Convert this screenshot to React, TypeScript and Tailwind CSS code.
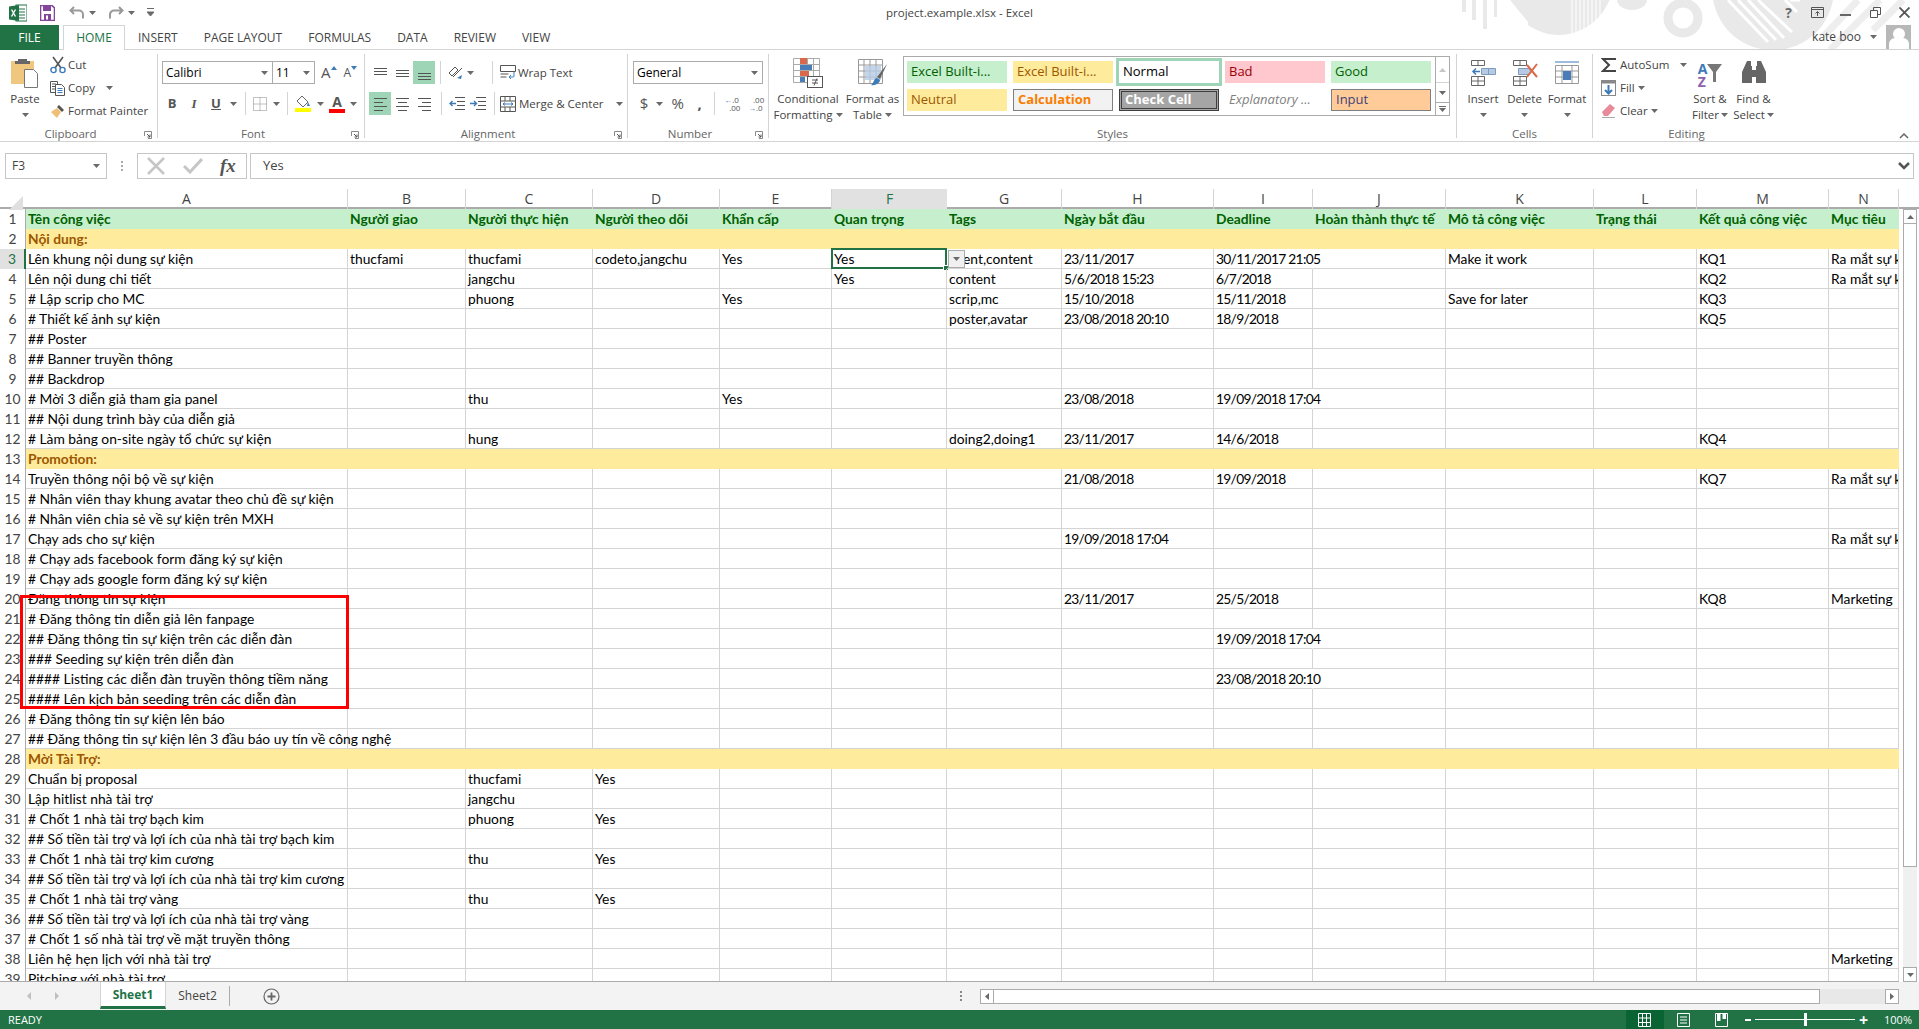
type RowData = {
  n: number;
  a: string;
  b?: string;
  c?: string;
  d?: string;
  e?: string;
  f?: string;
  g?: string;
  h?: string;
  i?: string;
  j?: string;
  k?: string;
  l?: string;
  m?: string;
  o?: string;
  kind?: "banner";
};

const rows: RowData[] = [
  { n: 2, a: "Nội dung:", kind: "banner" },
  { n: 3, a: "Lên khung nội dung sự kiện", b: "thucfami", c: "thucfami", d: "codeto,jangchu", e: "Yes", f: "Yes", g: "event,content", h: "23/11/2017", i: "30/11/2017 21:05", k: "Make it work", m: "KQ1", o: "Ra mắt sự kiện" },
  { n: 4, a: "Lên nội dung chi tiết", c: "jangchu", f: "Yes", g: "content", h: "5/6/2018 15:23", i: "6/7/2018", m: "KQ2", o: "Ra mắt sự kiện" },
  { n: 5, a: "# Lập scrip cho MC", c: "phuong", e: "Yes", g: "scrip,mc", h: "15/10/2018", i: "15/11/2018", k: "Save for later", m: "KQ3" },
  { n: 6, a: "# Thiết kế ảnh sự kiện", g: "poster,avatar", h: "23/08/2018 20:10", i: "18/9/2018", m: "KQ5" },
  { n: 7, a: "## Poster" },
  { n: 8, a: "## Banner truyền thông" },
  { n: 9, a: "## Backdrop" },
  { n: 10, a: "# Mời 3 diễn giả tham gia panel", c: "thu", e: "Yes", h: "23/08/2018", i: "19/09/2018 17:04" },
  { n: 11, a: "## Nội dung trình bày của diễn giả" },
  { n: 12, a: "# Làm bảng on-site ngày tổ chức sự kiện", c: "hung", g: "doing2,doing1", h: "23/11/2017", i: "14/6/2018", m: "KQ4" },
  { n: 13, a: "Promotion:", kind: "banner" },
  { n: 14, a: "Truyền thông nội bộ về sự kiện", h: "21/08/2018", i: "19/09/2018", m: "KQ7", o: "Ra mắt sự kiện" },
  { n: 15, a: "# Nhân viên thay khung avatar theo chủ đề sự kiện" },
  { n: 16, a: "# Nhân viên chia sẻ về sự kiện trên MXH" },
  { n: 17, a: "Chạy ads cho sự kiện", h: "19/09/2018 17:04", o: "Ra mắt sự kiện" },
  { n: 18, a: "# Chạy ads facebook form đăng ký sự kiện" },
  { n: 19, a: "# Chạy ads google form đăng ký sự kiện" },
  { n: 20, a: "Đăng thông tin sự kiện", h: "23/11/2017", i: "25/5/2018", m: "KQ8", o: "Marketing" },
  { n: 21, a: "# Đăng thông tin diễn giả lên fanpage" },
  { n: 22, a: "## Đăng thông tin sự kiện trên các diễn đàn", i: "19/09/2018 17:04" },
  { n: 23, a: "### Seeding sự kiện trên diễn đàn" },
  { n: 24, a: "#### Listing các diễn đàn truyền thông tiềm năng", i: "23/08/2018 20:10" },
  { n: 25, a: "#### Lên kịch bản seeding trên các diễn đàn" },
  { n: 26, a: "# Đăng thông tin sự kiện lên báo" },
  { n: 27, a: "## Đăng thông tin sự kiện lên 3 đầu báo uy tín về công nghệ" },
  { n: 28, a: "Mời Tài Trợ:", kind: "banner" },
  { n: 29, a: "Chuẩn bị proposal", c: "thucfami", d: "Yes" },
  { n: 30, a: "Lập hitlist nhà tài trợ", c: "jangchu" },
  { n: 31, a: "# Chốt 1 nhà tài trợ bạch kim", c: "phuong", d: "Yes" },
  { n: 32, a: "## Số tiền tài trợ và lợi ích của nhà tài trợ bạch kim" },
  { n: 33, a: "# Chốt 1 nhà tài trợ kim cương", c: "thu", d: "Yes" },
  { n: 34, a: "## Số tiền tài trợ và lợi ích của nhà tài trợ kim cương" },
  { n: 35, a: "# Chốt 1 nhà tài trợ vàng", c: "thu", d: "Yes" },
  { n: 36, a: "## Số tiền tài trợ và lợi ích của nhà tài trợ vàng" },
  { n: 37, a: "# Chốt 1 số nhà tài trợ về mặt truyền thông" },
  { n: 38, a: "Liên hệ hẹn lịch với nhà tài trợ", o: "Marketing" },
  { n: 39, a: "Pitching với nhà tài trợ" },
];

const letters = ["A", "B", "C", "D", "E", "F", "G", "H", "I", "J", "K", "L", "M", "N"];
const heads = ["Tên công việc", "Người giao", "Người thực hiện", "Người theo dõi", "Khẩn cấp", "Quan trọng", "Tags", "Ngày bắt đầu", "Deadline", "Hoàn thành thực tế", "Mô tả công việc", "Trạng thái", "Kết quả công việc", "Mục tiêu"];
const gridCols = "grid grid-cols-[26px_322px_118px_127px_127px_112px_115px_115px_152px_99px_133px_148px_103px_132px_70px]";

const Caret = ({ className = "" }: { className?: string }) => (
  <svg width="7" height="4" viewBox="0 0 7 4" className={className}>
    <path d="M0 0h7L3.5 4z" fill="#6a6a6a" />
  </svg>
);

const Launcher = () => (
  <svg width="8" height="8" viewBox="0 0 8 8" className="absolute right-[5px] bottom-[-1px]">
    <path d="M.5 5V.5H7.5V7.5H4" fill="none" stroke="#8a8a8a" />
    <path d="M3 3l3 3M6 3.5V6H3.5" fill="none" stroke="#555" />
  </svg>
);

const Sep = () => <div className="mx-auto h-[23px] w-px bg-[#d4d4d4]" />;

const Slot = ({ w, children }: { w: string; children?: React.ReactNode }) => (
  <div className={`${w} flex h-[23px] items-center justify-center`}>{children}</div>
);

const Lines = ({ ys, x1, x2 }: { ys: number[]; x1: number[]; x2: number[] }) => (
  <svg width="16" height="16" viewBox="0 0 16 16">
    {ys.map((y, i) => (
      <path key={y} d={`M${x1[i]} ${y + 0.5}H${x2[i]}`} stroke="#555" />
    ))}
  </svg>
);

const Group = ({ w, label, launcher, last, children }: { w: string; label: string; launcher?: boolean; last?: boolean; children: React.ReactNode }) => (
  <div className={`${w} relative flex h-[84px] shrink-0 flex-col ${last ? "" : "border-r border-[#d4d4d4]"}`}>
    <div className="h-[72px]">{children}</div>
    <div className={`h-[12px] text-center text-[11.5px] leading-[16px] text-[#666] ${launcher ? "pr-[16px]" : ""}`}>{label}</div>
    {launcher && <Launcher />}
  </div>
);

const TitleDecor = () => (
  <svg width="479" height="50" viewBox="0 0 479 50" className="absolute top-0 right-0" fill="#e9e9e9">
    <rect x="22" y="0" width="4" height="12" />
    <rect x="32" y="0" width="4" height="20" />
    <rect x="43" y="0" width="4" height="29" />
    <rect x="54" y="0" width="3" height="17" />
    <path d="M70 0l18 22V0z" />
    <path d="M88 0h82l-1 1C160 22 140 35 118 35c-11 0-21-4-30-10z" />
    <path d="M132 0v35M136 0v35M140 0v33M144 0v31M148 0v28M152 0v25M156 0v21M160 0v16" stroke="#fff" strokeWidth="1" />
    <path d="M177 0h30a15 10 0 0 1-30 0z" />
    <circle cx="243" cy="18" r="15" fill="none" stroke="#e9e9e9" strokeWidth="9" />
    <path d="M273 0h120c-6 30-30 50-60 50s-54-20-60-50z" />
    <path d="M288 0l40 42M298 0l38 40M308 0l36 38M318 0l34 32" stroke="#fff" strokeWidth="3" />
    <path d="M345 0l12 12M360 0l-10 0" stroke="#fff" strokeWidth="3" />
    <path d="M418 0l-34 36M440 0l-50 50M463 0l-30 30" stroke="#eeeeee" strokeWidth="7" fill="none" />
  </svg>
);

const TitleBar = () => (
  <div className="relative flex h-[25px] shrink-0 items-center text-[11.5px] text-[#444]">
    <TitleDecor />
    <svg width="18" height="18" viewBox="0 0 18 18" className="relative ml-[9px]">
      <rect x="7" y="1" width="11" height="16" fill="#fff" stroke="#217346" />
      <path d="M10 5h6M10 8h6M10 11h6M10 14h6" stroke="#217346" />
      <path d="M0 2.5l10-1.5v16L0 15.5z" fill="#217346" />
      <path d="M2.5 5.5l4 7M6.5 5.5l-4 7" stroke="#fff" strokeWidth="1.4" />
    </svg>
    <svg width="15" height="16" viewBox="0 0 15 16" className="ml-[13px]">
      <path d="M.5.5H12L14.5 3V15.5H.5z" fill="#fff" stroke="#82479a" strokeWidth="1.6" />
      <rect x="3" y="1" width="8" height="5" fill="#82479a" />
      <rect x="4" y="9" width="7" height="6" fill="#82479a" />
      <rect x="6" y="10.5" width="2" height="4" fill="#fff" />
    </svg>
    <svg width="16" height="14" viewBox="0 0 16 14" fill="none" stroke="#9a9a9a" strokeWidth="2" className="ml-[14px]">
      <path d="M5 1L1.5 4.5 5 8M2 4.5h8a4 4 0 0 1 4 4v4" />
    </svg>
    <Caret className="ml-[4px]" />
    <svg width="16" height="14" viewBox="0 0 16 14" fill="none" stroke="#9a9a9a" strokeWidth="2" className="ml-[12px]">
      <path d="M11 1l3.5 3.5L11 8M14 4.5H6a4 4 0 0 0-4 4v4" />
    </svg>
    <Caret className="ml-[4px]" />
    <svg width="7" height="9" viewBox="0 0 7 9" className="ml-[12px]">
      <path d="M0 .5h7M0 4h7L3.5 8z" stroke="#6a6a6a" fill="#6a6a6a" strokeWidth="1" />
    </svg>
    <div className="absolute inset-x-0 top-0 text-center leading-[26px]">project.example.xlsx - Excel</div>
    <div className="relative ml-auto flex items-center">
      <span className="mr-[19px] text-[14px] font-bold text-[#6a6a6a]">?</span>
      <svg width="13" height="11" viewBox="0 0 13 11" className="mr-[16px]" fill="none" stroke="#555">
        <path d="M.5.5h12v10H.5zM.5 2.5h12M6.5 9V4.5M4.5 6.5l2-2 2 2" />
      </svg>
      <div className="mr-[19px] h-[2px] w-[11px] translate-y-[2px] bg-[#666]" />
      <svg width="11" height="11" viewBox="0 0 11 11" className="mr-[18px]" fill="none" stroke="#555">
        <path d="M.5 3.5h7v7H.5zM3.5 3V.5h7v7H8" />
      </svg>
      <svg width="11" height="11" viewBox="0 0 11 11" className="mr-[9px]" stroke="#555" strokeWidth="1.8">
        <path d="M.5.5l10 10M10.5.5l-10 10" />
      </svg>
    </div>
  </div>
);

const tabClass = "flex h-[25px] items-center px-[13px] text-[12px] text-[#444]";

const Tabs = () => (
  <div className="relative flex h-[25px] shrink-0 border-b border-[#d4d4d4]">
    <div className="flex h-[25px] w-[59px] items-center justify-center bg-[#217346] text-[12px] text-white">FILE</div>
    <div className="ml-[4px] flex h-[25px] w-[62px] items-center justify-center border-x border-t border-[#d4d4d4] bg-white text-[12px] text-[#217346]">HOME</div>
    <div className={tabClass}>INSERT</div>
    <div className={tabClass}>PAGE LAYOUT</div>
    <div className={tabClass}>FORMULAS</div>
    <div className={tabClass}>DATA</div>
    <div className={tabClass}>REVIEW</div>
    <div className={tabClass}>VIEW</div>
    <div className="absolute top-0 right-[8px] flex h-[24px] items-center text-[12px] text-[#444]">
      <span>kate boo</span>
      <Caret className="mx-[9px]" />
      <div className="flex h-[24px] w-[25px] flex-col items-center overflow-hidden bg-[#b8b8b8]">
        <div className="mt-[3px] h-[13px] w-[12px] rounded-full bg-white" />
        <div className="mt-[-2px] h-[12px] w-[20px] rounded-t-md bg-white" />
      </div>
    </div>
  </div>
);

const Clipboard = () => (
  <Group w="w-[158px]" label="Clipboard" launcher>
    <div className="flex">
      <div className="flex w-[50px] flex-col items-center pt-[4px]">
        <svg width="30" height="30" viewBox="0 0 30 30">
          <path d="M1 3h23v23H1z" fill="#f0c77e" />
          <path d="M8 3V1h9v2h3v3H5V3z" fill="#666" />
          <path d="M14.5 11.5h9l4 4v14h-13z" fill="#fff" stroke="#777" />
        </svg>
        <span className="mt-[2px] text-[11.5px] text-[#444]">Paste</span>
        <Caret className="mt-[6px]" />
      </div>
      <div className="mt-[-1px] flex flex-col text-[11.5px] text-[#444]">
        <div className="flex h-[23px] items-center">
          <svg width="16" height="18" viewBox="0 0 16 18" fill="none" className="mr-[2px]">
            <path d="M3 1l8 11M13 1L5 12" stroke="#555" strokeWidth="1.6" />
            <circle cx="3.5" cy="14" r="2.6" stroke="#3d7ab8" strokeWidth="1.4" />
            <circle cx="12.5" cy="14" r="2.6" stroke="#3d7ab8" strokeWidth="1.4" />
          </svg>
          Cut
        </div>
        <div className="flex h-[23px] items-center">
          <svg width="16" height="16" viewBox="0 0 16 16" fill="none" stroke="#555" className="mr-[2px]">
            <path d="M.5 1.5h7v11h-7zM2 4h4M2 6.5h3M2 9h3" />
            <path d="M5.5 4.5h6l3 3v8h-9z" fill="#fff" />
            <path d="M7.5 8.5h5M7.5 10.5h5M7.5 12.5h5" stroke="#3d7ab8" />
          </svg>
          Copy
          <Caret className="ml-[11px]" />
        </div>
        <div className="flex h-[23px] items-center">
          <svg width="16" height="16" viewBox="0 0 16 16" className="mr-[2px]">
            <path d="M9 2l5 5-2 2-5-5z" fill="#555" />
            <path d="M7 5l4 4-4 6-6-6z" fill="#eebf74" />
          </svg>
          Format Painter
        </div>
      </div>
    </div>
  </Group>
);

const boxClass = "flex h-[23px] items-center border border-[#ababab] bg-white text-[12px] text-black";

const FontGroup = () => (
  <Group w="w-[207px]" label="Font" launcher>
    <div className="flex items-center pt-[7px] pl-[4px]">
      <div className={`${boxClass} w-[111px] justify-between pr-[4px] pl-[3px]`}>
        Calibri
        <Caret />
      </div>
      <div className={`${boxClass} ml-[-1px] w-[43px] justify-between pr-[4px] pl-[3px]`}>
        11
        <Caret />
      </div>
      <div className="ml-[6px] flex h-[23px] items-center text-[#555]">
        <span className="text-[15px]">A</span>
        <svg width="6" height="4" viewBox="0 0 6 4" className="mb-[10px]"><path d="M0 4l3-4 3 4z" fill="#3d7ab8" /></svg>
        <span className="ml-[7px] text-[12px]">A</span>
        <svg width="6" height="4" viewBox="0 0 6 4" className="mb-[10px]"><path d="M0 0l3 4 3-4z" fill="#3d7ab8" /></svg>
      </div>
    </div>
    <div className="mt-[8px] flex pl-[3px] text-[13px] text-[#555]">
      <Slot w="w-[22px]"><span className="font-bold">B</span></Slot>
      <Slot w="w-[22px]"><span className="font-['Liberation_Serif',serif] font-bold italic">I</span></Slot>
      <Slot w="w-[22px]"><span className="font-bold underline">U</span></Slot>
      <Slot w="w-[12px]"><Caret /></Slot>
      <Slot w="w-[12px]"><Sep /></Slot>
      <Slot w="w-[18px]">
        <svg width="14" height="14" viewBox="0 0 14 14" fill="none" stroke="#888" strokeDasharray="1 1">
          <path d="M.5.5h13v13H.5zM.5 7h13M7 .5v13" />
        </svg>
      </Slot>
      <Slot w="w-[14px]"><Caret /></Slot>
      <Slot w="w-[8px]"><Sep /></Slot>
      <Slot w="w-[23px]">
        <svg width="16" height="17" viewBox="0 0 16 17">
          <path d="M7 1l6 6-5 5-6-6z" fill="#fff" stroke="#666" />
          <path d="M13 7l2 4h-3z" fill="#3d7ab8" />
          <rect y="13" width="16" height="4" fill="#ffff00" />
        </svg>
      </Slot>
      <Slot w="w-[12px]"><Caret /></Slot>
      <Slot w="w-[22px]">
        <div className="flex flex-col items-center">
          <span className="h-[13px] text-[14px] leading-[14px] font-bold">A</span>
          <div className="mt-[1px] h-[4px] w-[16px] bg-[#ff0000]" />
        </div>
      </Slot>
      <Slot w="w-[10px]"><Caret /></Slot>
    </div>
  </Group>
);

const Alignment = () => (
  <Group w="w-[263px]" label="Alignment" launcher>
    <div className="flex items-center pt-[7px] pl-[4px] text-[11.5px] text-[#444]">
      <Slot w="w-[22px]"><Lines ys={[3, 6, 9]} x1={[2, 2, 2]} x2={[15, 15, 15]} /></Slot>
      <Slot w="w-[22px]"><Lines ys={[5, 8, 11]} x1={[2, 2, 2]} x2={[15, 15, 15]} /></Slot>
      <Slot w="w-[22px]"><div className="flex h-[23px] w-[22px] items-center justify-center bg-[#9fd5b7]"><Lines ys={[8, 11, 14]} x1={[2, 2, 2]} x2={[15, 15, 15]} /></div></Slot>
      <Slot w="w-[10px]"><Sep /></Slot>
      <Slot w="w-[20px]">
        <svg width="17" height="17" viewBox="0 0 17 17" fill="none" stroke="#555">
          <path d="M2 9l6-6 3 3-6 6zM6 13l9-9" />
          <path d="M10 14l5-3-1 4z" fill="#3d7ab8" stroke="none" />
        </svg>
      </Slot>
      <Slot w="w-[11px]"><Caret /></Slot>
      <Slot w="w-[24px]"><div className="ml-[8px]"><Sep /></div></Slot>
      <svg width="16" height="16" viewBox="0 0 16 16" fill="none" stroke="#555">
        <path d="M.5.5h15v6H.5zM.5 9h8M.5 12h6" />
        <path d="M14 7v4a1 1 0 0 1-1 1H9M11 10l-2 2 2 2" stroke="#3d7ab8" />
      </svg>
      <span className="ml-[2px]">Wrap Text</span>
    </div>
    <div className="mt-[8px] flex items-center pl-[4px] text-[11.5px] text-[#444]">
      <Slot w="w-[22px]"><div className="flex h-[23px] w-[22px] items-center justify-center bg-[#9fd5b7]"><Lines ys={[2, 6, 10, 14]} x1={[2, 2, 2, 2]} x2={[15, 11, 15, 11]} /></div></Slot>
      <Slot w="w-[22px]"><Lines ys={[2, 6, 10, 14]} x1={[2, 4, 2, 4]} x2={[15, 13, 15, 13]} /></Slot>
      <Slot w="w-[22px]"><Lines ys={[2, 6, 10, 14]} x1={[2, 6, 2, 6]} x2={[15, 15, 15, 15]} /></Slot>
      <Slot w="w-[12px]"><Sep /></Slot>
      <Slot w="w-[20px]">
        <svg width="16" height="14" viewBox="0 0 16 14" fill="none">
          <path d="M6 .5h10M8 4.5h8M8 8.5h8M6 12.5h10" stroke="#555" />
          <path d="M7 6.5H1M3.5 4L1 6.5 3.5 9" stroke="#3d7ab8" strokeWidth="1.4" />
        </svg>
      </Slot>
      <Slot w="w-[22px]">
        <svg width="16" height="14" viewBox="0 0 16 14" fill="none">
          <path d="M6 .5h10M8 4.5h8M8 8.5h8M6 12.5h10" stroke="#555" />
          <path d="M0 6.5h6M4 4l2.5 2.5L4 9" stroke="#3d7ab8" strokeWidth="1.4" />
        </svg>
      </Slot>
      <Slot w="w-[10px]"><Sep /></Slot>
      <svg width="16" height="16" viewBox="0 0 16 16" fill="none" stroke="#555" className="ml-[1px]">
        <path d="M.5.5h15v15H.5zM.5 5h15M.5 11h15M5 .5V5M10 .5V5M5 11v4.5M10 11v4.5" />
        <path d="M3 8h10M5 6.5L3 8l2 1.500M11 6.500L13 8l-2 1.500" stroke="#3d7ab8" />
      </svg>
      <span className="ml-[3px]">Merge &amp; Center</span>
      <Caret className="ml-[12px]" />
    </div>
  </Group>
);

const NumberGroup = () => (
  <Group w="w-[141px]" label="Number" launcher>
    <div className="pt-[7px] pl-[5px]">
      <div className={`${boxClass} w-[130px] justify-between pr-[4px] pl-[3px]`}>
        General
        <Caret />
      </div>
    </div>
    <div className="mt-[8px] flex items-center pl-[5px] text-[#555]">
      <Slot w="w-[22px]"><span className="text-[15px]">$</span></Slot>
      <Slot w="w-[10px]"><Caret /></Slot>
      <Slot w="w-[26px]"><span className="text-[15px]">%</span></Slot>
      <Slot w="w-[18px]"><span className="text-[15px] font-bold">,</span></Slot>
      <Slot w="w-[12px]"><Sep /></Slot>
      <Slot w="w-[24px]">
        <div className="flex flex-col text-[8px] leading-[8px]">
          <span><span className="font-bold text-[#3d7ab8]">←</span>.0</span>
          <span className="pl-[5px]">.00</span>
        </div>
      </Slot>
      <Slot w="w-[24px]">
        <div className="flex flex-col text-[8px] leading-[8px]">
          <span className="pl-[5px]">.00</span>
          <span><span className="font-bold text-[#3d7ab8]">→</span>.0</span>
        </div>
      </Slot>
    </div>
  </Group>
);

const galleryCell = "flex h-[22px] w-[100px] items-center pl-[4px] text-[13px]";

const StylesGroup = () => (
  <Group w="w-[688px]" label="Styles">
    <div className="flex">
      <div className="ml-[5px] flex w-[68px] flex-col items-center pt-[4px] text-[11.5px] leading-[16px] text-[#444]">
        <svg width="30" height="30" viewBox="0 0 30 30">
          <path d="M.5.500h26v24H.5zM.5 6.500h26M.5 12.500h26M.5 18.500h26M7.500.5v24M14.500.5v24M20.500.5v24" fill="#fff" stroke="#aaa" />
          <rect x="7" y="0" width="7" height="6" fill="#d9694a" />
          <rect x="7" y="7" width="12" height="5" fill="#4a7db8" />
          <rect x="7" y="13" width="9" height="5" fill="#d9694a" />
          <rect x="7" y="19" width="5" height="5" fill="#4a7db8" />
          <rect x="14.500" y="18.500" width="15" height="11" fill="#fff" stroke="#555" />
          <path d="M19 22h6M19 25h6M24 20.500l-3 7" stroke="#555" />
        </svg>
        <span className="mt-[3px]">Conditional</span>
        <span className="flex items-center gap-[3px]">Formatting <Caret /></span>
      </div>
      <div className="flex w-[61px] flex-col items-center pt-[4px] text-[11.5px] leading-[16px] text-[#444]">
        <svg width="30" height="30" viewBox="0 0 30 30">
          <path d="M.5 1.500h24v24H.5zM.5 7h24M.5 13h24M.5 19h24M6 1.500v24M12 1.500v24M18 1.500v24" fill="#fff" stroke="#999" />
          <rect x="7" y="8" width="16" height="14" fill="#b6cbe3" opacity="0.8" />
          <path d="M29 6L19 19l3 2z" fill="#666" />
          <path d="M19 20l3 2c0 3-5 6-9 5 3-2 3-7 6-7z" fill="#3d7ab8" />
        </svg>
        <span className="mt-[3px]">Format as</span>
        <span className="flex items-center gap-[3px]">Table <Caret /></span>
      </div>
      <div className="mt-[2px] flex h-[60px] w-[547px] shrink-0 items-start border border-[#ababab] bg-white">
        <div className="grid grid-cols-[100px_100px_106px_100px_100px] grid-rows-[22px_22px] gap-x-[4px] gap-y-[6px] pt-[4px] pl-[3px]">
          <div className={`${galleryCell} bg-[#c6efce] text-[#006100]`}>Excel Built-i...</div>
          <div className={`${galleryCell} ml-[2px] bg-[#ffeb9c] text-[#9c5700]`}>Excel Built-i...</div>
          <div className="mt-[-3px] ml-[1px] flex h-[28px] w-[106px] items-center border-[3px] border-[#9fd5b7] pl-[4px] text-[13px] text-black">Normal</div>
          <div className={`${galleryCell} bg-[#ffc7ce] text-[#9c0006]`}>Bad</div>
          <div className={`${galleryCell} ml-[2px] bg-[#c6efce] text-[#006100]`}>Good</div>
          <div className={`${galleryCell} bg-[#ffeb9c] text-[#9c5700]`}>Neutral</div>
          <div className={`${galleryCell} ml-[2px] border border-[#7f7f7f] bg-[#f2f2f2] font-bold text-[#fa7d00]`}>Calculation</div>
          <div className="ml-[4px] flex h-[22px] w-[100px] items-center border-[3px] border-double border-[#3f3f3f] bg-[#a5a5a5] pl-[3px] text-[13px] font-bold text-white">Check Cell</div>
          <div className={`${galleryCell} text-[#7f7f7f] italic`}>Explanatory ...</div>
          <div className={`${galleryCell} ml-[2px] border border-[#7f7f7f] bg-[#ffcc99] text-[#3f3f76]`}>Input</div>
        </div>
        <div className="ml-auto flex h-full w-[14px] flex-col border-l border-[#ababab]">
          <div className="flex h-[26px] items-center justify-center border-b border-[#d4d4d4]"><svg width="7" height="4" viewBox="0 0 7 4"><path d="M0 4l3.500-4L7 4z" fill="#c6c6c6" /></svg></div>
          <div className="flex h-[20px] items-center justify-center border-b border-[#ababab]"><Caret /></div>
          <div className="flex flex-1 flex-col items-center justify-center">
            <div className="mb-[1px] h-px w-[7px] bg-[#6a6a6a]" />
            <Caret />
          </div>
        </div>
      </div>
    </div>
  </Group>
);

const CellButton = ({ w, label, children }: { w: string; label: string; children: React.ReactNode }) => (
  <div className={`${w} flex flex-col items-center pt-[4px] text-[11.5px] leading-[16px] text-[#444]`}>
    <div className="flex h-[30px] items-center">{children}</div>
    <span className="mt-[3px]">{label}</span>
    <Caret className="mt-[6px]" />
  </div>
);

const CellsGroup = () => (
  <Group w="w-[136px]" label="Cells">
    <div className="flex pl-[5px]">
      <CellButton w="w-[42px]" label="Insert">
        <svg width="26" height="28" viewBox="0 0 26 28" fill="none" stroke="#666">
          <path d="M1.500 1.500h13v5h-13zM8 1.500v5M1.500 17.500h13v9h-13zM1.500 22h13M8 17.500v9" />
          <path d="M11.500 9.500h14v6h-14zM18.500 9.500v6" fill="#b6cbe3" stroke="#7d9dc0" />
          <path d="M10 12.500H3M6 9.500l-3 3 3 3" stroke="#3d7ab8" strokeWidth="1.500" />
        </svg>
      </CellButton>
      <CellButton w="w-[41px]" label="Delete">
        <svg width="26" height="28" viewBox="0 0 26 28" fill="none" stroke="#666">
          <path d="M1.500 1.500h13v5h-13zM8 1.500v5M1.500 17.500h13v9h-13zM1.500 22h13M8 17.500v9" />
          <path d="M6.500 9.500h10l3 3-3 3h-10z" fill="#b6cbe3" stroke="#7d9dc0" />
          <path d="M15 6l10 12M25 5L15 18" stroke="#d9694a" strokeWidth="2" />
        </svg>
      </CellButton>
      <CellButton w="w-[44px]" label="Format">
        <svg width="26" height="30" viewBox="0 0 26 30" fill="none" stroke="#999">
          <path d="M1 4h24" stroke="#3d7ab8" />
          <path d="M1.500 7.500h23v18h-23zM1.500 13h23M1.500 19h23M8 7.500v18M18 7.500v18" />
          <rect x="9" y="13" width="8" height="9" fill="#4a7db8" stroke="none" />
        </svg>
      </CellButton>
    </div>
  </Group>
);

const EditingGroup = () => (
  <Group w="w-[187px]" label="Editing" last>
    <div className="flex text-[11.5px] text-[#444]">
      <div className="mt-[-1px] flex w-[95px] flex-col pl-[8px]">
        <div className="flex h-[23px] items-center">
          <svg width="16" height="16" viewBox="0 0 16 16" fill="none" stroke="#444" strokeWidth="2" className="mr-[3px]">
            <path d="M15 2H2l6 6-6 6h13" />
          </svg>
          AutoSum
          <Caret className="ml-[11px]" />
        </div>
        <div className="flex h-[23px] items-center">
          <svg width="15" height="16" viewBox="0 0 15 16" className="mr-[4px]">
            <rect x="0.500" y="0.500" width="14" height="15" fill="#fff" stroke="#888" />
            <rect x="0.500" y="0.500" width="14" height="3" fill="#888" />
            <path d="M7.500 5v8M4 10l3.500 3.500L11 10" fill="none" stroke="#3d7ab8" strokeWidth="2" />
          </svg>
          Fill
          <Caret className="ml-[3px]" />
        </div>
        <div className="flex h-[23px] items-center">
          <svg width="15" height="15" viewBox="0 0 15 15" className="mr-[4px]">
            <path d="M9 1l5 4-7 8H3L1 9z" fill="#e88a9a" />
            <path d="M1 14.500h13" stroke="#aaa" />
          </svg>
          Clear
          <Caret className="ml-[3px]" />
        </div>
      </div>
      <div className="flex w-[44px] flex-col items-center pt-[4px] leading-[16px]">
        <div className="flex h-[30px] items-end">
          <div className="flex flex-col text-[14px] leading-[13px] font-bold">
            <span className="text-[#3d7ab8]">A</span>
            <span className="text-[#8f5fb0]">Z</span>
          </div>
          <svg width="15" height="18" viewBox="0 0 15 18" className="mb-[6px]"><path d="M0 0h15L9 8v10H6V8z" fill="#777" /></svg>
        </div>
        <span className="mt-[3px]">Sort &amp;</span>
        <span className="flex items-center gap-[2px]">Filter <Caret /></span>
      </div>
      <div className="flex w-[43px] flex-col items-center pt-[4px] leading-[16px]">
        <svg width="26" height="30" viewBox="0 0 26 30" fill="#666">
          <path d="M6 3h4v5h1v17H1V14zM20 3h-4v5h-1v17h10V14z" />
          <rect x="11" y="12" width="4" height="7" />
        </svg>
        <span className="mt-[3px]">Find &amp;</span>
        <span className="flex items-center gap-[2px]">Select <Caret /></span>
      </div>
    </div>
  </Group>
);

const Ribbon = () => (
  <div className="flex h-[92px] shrink-0 border-b border-[#d4d4d4] pt-[4px]">
    <Clipboard />
    <FontGroup />
    <Alignment />
    <NumberGroup />
    <StylesGroup />
    <CellsGroup />
    <EditingGroup />
    <div className="flex flex-1 items-end justify-end pr-[10px] pb-[2px]">
      <svg width="10" height="6" viewBox="0 0 10 6" fill="none" stroke="#666" strokeWidth="1.500"><path d="M1 5l4-4 4 4" /></svg>
    </div>
  </div>
);

const FormulaBar = () => (
  <div className="mt-[11px] flex h-[26px] shrink-0 items-stretch pr-[5px] text-[12px] text-[#444]">
    <div className="ml-[5px] flex w-[102px] items-center justify-between border border-[#c6c6c6] pr-[6px] pl-[6px]">
      F3
      <Caret />
    </div>
    <div className="flex w-[30px] flex-col items-center justify-center gap-[2px]">
      <div className="h-[2px] w-[2px] bg-[#aaa]" />
      <div className="h-[2px] w-[2px] bg-[#aaa]" />
      <div className="h-[2px] w-[2px] bg-[#aaa]" />
    </div>
    <div className="flex w-[110px] items-center border border-[#c6c6c6] pl-[9px]">
      <svg width="18" height="18" viewBox="0 0 18 18" stroke="#c6c6c6" strokeWidth="2.500"><path d="M1 1l16 16M17 1L1 17" /></svg>
      <svg width="20" height="16" viewBox="0 0 20 16" fill="none" stroke="#c6c6c6" strokeWidth="3" className="ml-[18px]"><path d="M1 8l6 6L19 1" /></svg>
      <span className="ml-[17px] font-['Liberation_Serif',serif] text-[19px] font-bold text-[#555] italic">fx</span>
    </div>
    <div className="ml-[3px] flex flex-1 items-center justify-between border border-[#c6c6c6] pr-[3px] pl-[12px] text-[13px]">
      Yes
      <svg width="12" height="8" viewBox="0 0 12 8" fill="none" stroke="#555" strokeWidth="2.500"><path d="M1 1l5 5 5-5" /></svg>
    </div>
  </div>
);

const ColumnHeaders = () => (
  <div className={`${gridCols} mt-[10px] h-[20px] border-b-2 border-[#ababab] text-[14px] leading-[20px] text-[#444]`}>
    <div className="flex items-end justify-end pr-[3px] pb-[1px]">
      <svg width="14" height="14" viewBox="0 0 14 14"><path d="M14 0v14H0z" fill="#dfdfdf" /></svg>
    </div>
    {letters.map((l) => (
      <div key={l} className={l === "F" ? "border-b-2 border-[#217346] bg-[#e1e1e1] text-center text-[#217346]" : "border-r border-[#d4d4d4] text-center"}>
        {l}
      </div>
    ))}
  </div>
);

const cellClass = "relative h-5 whitespace-nowrap border-r border-b border-[#d4d4d4] pl-[2px] leading-[20px] text-black";
const dateClass = `${cellClass} tracking-[-0.7px]`;

const DataRow = ({ row }: { row: RowData }) => {
  if (row.kind === "banner") {
    return (
      <div className="flex h-5">
        <div className="h-5 w-[26px] shrink-0 border-r border-[#ababab] text-center leading-[20px] text-[#444]">{row.n}</div>
        <div className="flex-1 bg-[#ffeb9c] pl-[2px] leading-[20px] font-bold text-[#9c5700]">{row.a}</div>
      </div>
    );
  }
  const selected = row.n === 3;
  const iSpills = (row.i ?? "").length > 10;
  return (
    <div className={gridCols}>
      <div className={selected ? "h-5 border-r-2 border-[#217346] bg-[#e1e1e1] text-center leading-[20px] text-[#217346]" : "h-5 border-r border-[#ababab] text-center leading-[20px] text-[#444]"}>{row.n}</div>
      <div className={cellClass}>{row.a}</div>
      <div className={cellClass}>{row.b}</div>
      <div className={cellClass}>{row.c}</div>
      <div className={cellClass}>{row.d}</div>
      <div className={cellClass}>{row.e}</div>
      <div className={cellClass}>
        {row.f}
        {selected && (
          <div className="absolute inset-x-[-1px] top-[-1px] bottom-[-1px] border-2 border-[#217346]">
            <div className="absolute right-[-4px] bottom-[-4px] h-[6px] w-[6px] border border-white bg-[#217346]" />
          </div>
        )}
      </div>
      <div className={cellClass}>
        {row.g}
        {selected && (
          <div className="absolute top-[1px] left-[1px] flex h-[18px] w-[17px] items-center justify-center border border-[#ababab] bg-[#f0f0f0]">
            <Caret />
          </div>
        )}
      </div>
      <div className={dateClass}>{row.h}</div>
      <div className={iSpills ? `${dateClass} border-r-transparent` : dateClass}>{row.i}</div>
      <div className={cellClass}>{row.j}</div>
      <div className={cellClass}>{row.k}</div>
      <div className={cellClass}>{row.l}</div>
      <div className={cellClass}>{row.m}</div>
      <div className={`${cellClass} overflow-hidden`}>{row.o}</div>
    </div>
  );
};

const Sheet = () => (
  <div className="relative h-[773px] overflow-hidden border-b border-[#ababab]">
    <div className={`${gridCols} h-5`}>
      <div className="h-5 border-r border-[#ababab] text-center leading-[20px] text-[#444]">1</div>
      {heads.map((h) => (
        <div key={h} className="h-5 whitespace-nowrap bg-[#c6efce] pl-[2px] leading-[20px] font-bold text-[#006100]">{h}</div>
      ))}
    </div>
    {rows.map((r) => (
      <DataRow key={r.n} row={r} />
    ))}
    <div className="absolute top-[386px] left-[20px] h-[114px] w-[329px] border-[3px] border-[#ff0000]" />
  </div>
);

const VScroll = () => (
  <div className="ml-[4px] flex w-[14px] flex-col">
    <div className="flex h-[15px] items-center justify-center border border-[#ababab] bg-white">
      <svg width="7" height="4" viewBox="0 0 7 4"><path d="M0 4l3.500-4L7 4z" fill="#6a6a6a" /></svg>
    </div>
    <div className="h-[643px] border-x border-b border-[#ababab] bg-white" />
    <div className="flex-1 bg-[#f0f0f0]" />
    <div className="flex h-[15px] items-center justify-center border border-[#ababab] bg-white">
      <Caret />
    </div>
  </div>
);

const SheetTabs = () => (
  <div className="flex h-[28px] shrink-0 items-center bg-[#f3f3f3] text-[12px] text-[#444]">
    <div className="flex w-[100px] items-center pl-[27px]">
      <svg width="4" height="8" viewBox="0 0 4 8"><path d="M4 0v8L0 4z" fill="#c0c0c0" /></svg>
      <svg width="4" height="8" viewBox="0 0 4 8" className="ml-[24px]"><path d="M0 0v8l4-4z" fill="#c0c0c0" /></svg>
    </div>
    <div className="flex h-[27px] w-[66px] items-center justify-center self-start border-x border-b-[3px] border-[#d4d4d4] border-b-[#217346] bg-white pt-[2px] font-bold text-[#217346]">Sheet1</div>
    <div className="flex h-[20px] w-[64px] items-center justify-center border-r border-[#ababab]">Sheet2</div>
    <svg width="17" height="17" viewBox="0 0 17 17" fill="none" stroke="#666" className="ml-[33px]">
      <circle cx="8.500" cy="8.500" r="7.500" strokeWidth="1.200" />
      <path d="M8.500 4.500v8M4.500 8.500h8" strokeWidth="1.800" />
    </svg>
    <div className="ml-[680px] flex flex-col gap-[2px]">
      <div className="h-[2px] w-[2px] bg-[#888]" />
      <div className="h-[2px] w-[2px] bg-[#888]" />
      <div className="h-[2px] w-[2px] bg-[#888]" />
    </div>
    <div className="ml-[18px] flex h-[15px] w-[919px] items-stretch bg-[#e8e8e8]">
      <div className="flex w-[14px] items-center justify-center border border-[#ababab] bg-white">
        <svg width="4" height="7" viewBox="0 0 4 7"><path d="M4 0v7L0 3.500z" fill="#6a6a6a" /></svg>
      </div>
      <div className="w-[826px] border-y border-r border-[#ababab] bg-white" />
      <div className="flex-1" />
      <div className="flex w-[14px] items-center justify-center border border-[#ababab] bg-white">
        <svg width="4" height="7" viewBox="0 0 4 7"><path d="M0 0v7l4-3.500z" fill="#6a6a6a" /></svg>
      </div>
    </div>
  </div>
);

const StatusBar = () => (
  <div className="flex h-[19px] shrink-0 items-center bg-[#217346] pl-[8px] text-[11px] leading-[21px] text-white">
    READY
    <div className="ml-auto flex h-full items-center">
      <div className="flex h-full w-[38px] items-center justify-center bg-[#0a6332]">
        <svg width="13" height="14" viewBox="0 0 13 14" fill="none" stroke="#fff"><path d="M.5.5h12v13H.5zM.5 5h12M.5 9.500h12M4.500.5v13M8.500.5v13" /></svg>
      </div>
      <div className="flex w-[39px] justify-center">
        <svg width="13" height="14" viewBox="0 0 13 14" fill="none" stroke="#fff"><path d="M.5.5h12v13H.5zM3 4h7M3 7h7M3 10h7" /></svg>
      </div>
      <div className="flex w-[38px] justify-center">
        <svg width="13" height="14" viewBox="0 0 13 14"><path d="M.5.5h12v13H.5z" fill="none" stroke="#fff" /><path d="M2 1h3.500v7H2zM7.500 1H11v5H7.500z" fill="#fff" /></svg>
      </div>
      <div className="ml-[4px] h-[2px] w-[6px] bg-white" />
      <div className="relative ml-[4px] h-px w-[100px] bg-white">
        <div className="absolute top-[-6px] left-[49px] h-[13px] w-[3px] bg-white" />
      </div>
      <span className="ml-[4px] text-[16px] leading-none font-bold">+</span>
      <span className="mr-[7px] ml-[16px]">100%</span>
    </div>
  </div>
);

export default function App() {
  return (
    <div className="flex h-[1029px] w-[1919px] flex-col overflow-hidden bg-white font-['Open_Sans',sans-serif]">
      <TitleBar />
      <Tabs />
      <Ribbon />
      <FormulaBar />
      <ColumnHeaders />
      <div className="flex font-['Lato',sans-serif] text-[13.8px]">
        <div className="w-[1899px]">
          <Sheet />
        </div>
        <VScroll />
      </div>
      <SheetTabs />
      <StatusBar />
    </div>
  );
}
